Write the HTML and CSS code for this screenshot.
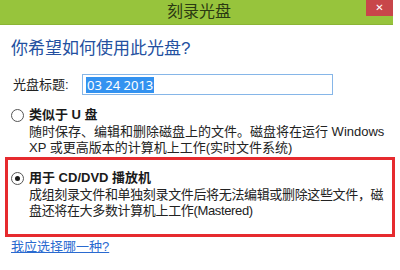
FILE: index.html
```html
<!DOCTYPE html>
<html lang="zh-CN">
<head>
<meta charset="utf-8">
<title>刻录光盘</title>
<link rel="stylesheet" href="styles.css">
</head>
<body>
<div class="window">
  <div class="titlebar">
    <span class="title">刻录光盘</span>
    <span class="close">✕</span>
  </div>
  <div class="content">
    <h1 class="heading">你希望如何使用此光盘?</h1>
    <div class="field">
      <span class="label">光盘标题:</span>
      <div class="input"><span class="sel">03 24 2013</span></div>
    </div>
    <div class="option">
      <div class="opt-head"><span class="radio"></span><span class="opt-title">类似于 U 盘</span></div>
      <div class="desc">随时保存、编辑和删除磁盘上的文件。磁盘将在运行 Windows<br>XP 或更高版本的计算机上工作(实时文件系统)</div>
    </div>
    <div class="option boxed">
      <div class="opt-head"><span class="radio checked"></span><span class="opt-title">用于 CD/DVD 播放机</span></div>
      <div class="desc tight">成组刻录文件和单独刻录文件后将无法编辑或删除这些文件，磁<br>盘还将在大多数计算机上工作(Mastered)</div>
    </div>
    <a class="help" href="#">我应选择哪一种?</a>
  </div>
</div>
</body>
</html>
```
FILE: styles.css
```css
html, body {
  margin: 0;
  padding: 0;
  background: #ffffff;
}
body {
  width: 400px;
  height: 270px;
  overflow: hidden;
  font-family: "Liberation Sans", "Noto Sans CJK SC", sans-serif;
  color: #1a1a1a;
}
.window {
  width: 400px;
}
.titlebar {
  position: relative;
  width: 393px;
  height: 25px;
  background: #97c43c;
  border-bottom: 1px solid #8bb535;
  box-sizing: border-box;
  display: flex;
  align-items: center;
  justify-content: center;
}
.title {
  font-size: 16px;
  line-height: 20px;
  color: #2b3a12;
  margin-left: 5px;
}
.close {
  position: absolute;
  top: 0;
  right: 0;
  width: 27px;
  height: 16px;
  background: #c8464a;
  color: #ffffff;
  font-family: "DejaVu Sans", sans-serif;
  font-size: 10px;
  font-weight: bold;
  line-height: 16px;
  text-align: center;
}
.heading {
  margin: 12px 0 0 11px;
  font-size: 17px;
  line-height: 24px;
  font-weight: normal;
  color: #2350a0;
}
.field {
  display: flex;
  align-items: center;
  margin-top: 13px;
  height: 21px;
}
.label {
  margin-left: 13px;
  width: 69px;
  font-size: 13px;
  line-height: 16px;
  color: #222;
}
.input {
  width: 251px;
  height: 21px;
  box-sizing: border-box;
  border: 1px solid #86b6e8;
  display: flex;
  align-items: center;
  padding-left: 3px;
}
.sel {
  background: #3392f0;
  color: #ffffff;
  font-family: "Noto Sans", sans-serif;
  font-size: 13px;
  line-height: 16px;
  padding: 0 1px;
}
.option {
  margin-top: 11px;
  padding-left: 11px;
}
.opt-head {
  display: flex;
  align-items: center;
  height: 18px;
}
.radio {
  width: 13px;
  height: 13px;
  box-sizing: border-box;
  border: 1px solid #555;
  border-radius: 50%;
  margin-right: 5px;
  display: flex;
  align-items: center;
  justify-content: center;
  background: #fff;
}
.radio.checked::after {
  content: "";
  width: 5px;
  height: 5px;
  border-radius: 50%;
  background: #1a1a1a;
}
.opt-title {
  font-size: 13px;
  line-height: 16px;
  font-weight: bold;
  color: #1a1a1a;
}
.desc {
  padding-left: 18px;
  font-size: 13px;
  line-height: 16px;
  color: #222;
  white-space: nowrap;
}
.desc.tight {
  letter-spacing: -0.35px;
}
.boxed {
  margin: 1px 5px 0 5px;
  width: 390px;
  box-sizing: border-box;
  border: 3px solid #e62a2e;
  padding: 9px 0 15px 3px;
}
.help {
  display: inline-block;
  margin: 2px 0 0 11px;
  font-size: 13px;
  line-height: 16px;
  color: #2a6ad0;
  text-decoration: underline;
}
```
